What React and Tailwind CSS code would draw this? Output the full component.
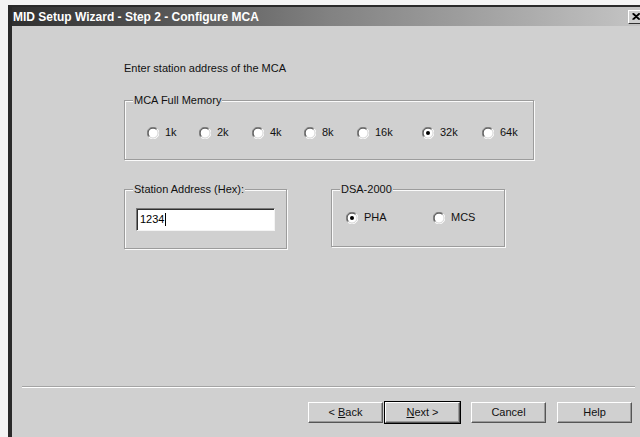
import React from 'react';

const ui = { fontFamily: '"Liberation Sans", Arial, sans-serif' };

function Radio({ checked }) {
  return (
    <svg width="12" height="12" viewBox="0 0 12 12" className="shrink-0">
      <circle cx="6" cy="6" r="5" fill="#ffffff" />
      <path d="M1.8 10.2 A5.9 5.9 0 0 1 10.2 1.8" fill="none" stroke="#8a8a8a" strokeWidth="1" />
      <path d="M10.2 1.8 A5.9 5.9 0 0 1 1.8 10.2" fill="none" stroke="#ffffff" strokeWidth="1" />
      <path d="M2.5 9.5 A4.9 4.9 0 0 1 9.5 2.5" fill="none" stroke="#3a3a3a" strokeWidth="1" />
      <path d="M9.5 2.5 A4.9 4.9 0 0 1 2.5 9.5" fill="none" stroke="#dcdcdc" strokeWidth="1" />
      {checked && <circle cx="6" cy="6" r="2" fill="#000000" />}
    </svg>
  );
}

function Option({ label, checked, className }) {
  return (
    <div className={'flex items-center gap-[6px] ' + className}>
      <Radio checked={checked} />
      <span className="text-[11px] leading-[13px] text-[#111]">{label}</span>
    </div>
  );
}

// etched group frame with a caption sitting on the top edge
function Group({ title, className, children }) {
  return (
    <div className={'relative border border-[#9c9c9c] shadow-[1px_1px_0_#fafafa,inset_1px_1px_0_#fafafa] ' + className}>
      <span className="absolute -top-[8px] left-[8px] px-[1px] bg-[#d0d0d0] text-[11px] leading-[14px] text-[#111]">{title}</span>
      {children}
    </div>
  );
}

function Button({ children, primary }) {
  return (
    <div className={primary ? 'border border-black' : 'border border-transparent'}>
      <div className="w-[75px] h-[21px] flex items-center justify-center bg-[#d0d0d0] border-t border-l border-t-white border-l-white border-r border-b border-r-[#555] border-b-[#555] shadow-[inset_-1px_-1px_0_#9a9a9a] text-[11px] text-[#111]">
        {children}
      </div>
    </div>
  );
}

const sizes = [
  { label: '1k', w: 'w-[52px]' },
  { label: '2k', w: 'w-[53px]' },
  { label: '4k', w: 'w-[52px]' },
  { label: '8k', w: 'w-[53px]' },
  { label: '16k', w: 'w-[65px]' },
  { label: '32k', w: 'w-[60px]', checked: true },
  { label: '64k', w: 'w-[50px]' },
];

export default function App() {
  return (
    <div className="w-[640px] h-[437px] overflow-hidden bg-[#f4f4f4] pt-[5px] pl-[8px]" style={ui}>
      <div className="w-[644px] h-[440px] bg-[#2a2a2a] px-[4px] pt-[2px] flex flex-col">
        {/* caption bar */}
        <div className="h-[19px] flex items-center justify-between bg-gradient-to-r from-[#303030] via-[#828282] to-[#c6c6c6] pl-[1px] pr-[4px]">
          <span className="text-white font-bold text-[12px] tracking-[0px]">MID Setup Wizard - Step 2 - Configure MCA</span>
          <div className="w-[16px] h-[14px] bg-[#d0d0d0] border-t border-l border-white border-r border-b border-r-[#333] border-b-[#333] flex items-center justify-center">
            <svg width="8" height="7" viewBox="0 0 8 7">
              <path d="M0.5 0.5 L7 6.5 M1.5 0.5 L8 6.5 M7 0.5 L0.5 6.5 M8 0.5 L1.5 6.5" stroke="#000" strokeWidth="1.1" />
            </svg>
          </div>
        </div>

        {/* dialog body */}
        <div className="flex-1 bg-[#d0d0d0] flex flex-col">
          <div className="pl-[112px] pt-[36px] text-[11px] leading-[13px] text-[#111]">Enter station address of the MCA</div>

          <Group title="MCA Full Memory" className="ml-[112px] mt-[25px] w-[410px] h-[60px]">
            <div className="flex items-center pl-[22px] pt-[25px]">
              {sizes.map((s) => (
                <Option key={s.label} label={s.label} checked={s.checked} className={s.w} />
              ))}
            </div>
          </Group>

          <div className="flex items-start ml-[112px] mt-[29px]">
            <Group title="Station Address (Hex):" className="w-[163px] h-[60px]">
              <div className="ml-[11px] mt-[18px] w-[139px] h-[23px] bg-white border-t border-l border-[#7a7a7a] border-r border-b border-r-[#f4f4f4] border-b-[#f4f4f4] shadow-[inset_1px_1px_0_#303030] flex items-center pl-[3px]">
                <span className="text-[11px] text-black">1234</span>
                <span className="w-px h-[13px] bg-black ml-px"></span>
              </div>
            </Group>

            <Group title="DSA-2000" className="ml-[44px] w-[174px] h-[58px]">
              <div className="flex items-center pl-[14px] pt-[21px]">
                <Option label="PHA" checked className="w-[87px]" />
                <Option label="MCS" />
              </div>
            </Group>
          </div>

          <div className="ml-[10px] mr-[13px] mt-[137px] h-[2px] border-t border-[#a4a4a4] border-b border-b-white"></div>

          <div className="flex items-center justify-end pr-[15px] mt-[13px]">
            <Button>&lt; <span className="underline ml-[3px]">B</span>ack</Button>
            <Button primary><span className="underline">N</span>ext &gt;</Button>
            <div className="w-[9px]"></div>
            <Button>Cancel</Button>
            <div className="w-[9px]"></div>
            <Button>Help</Button>
          </div>
        </div>
      </div>
    </div>
  );
}
